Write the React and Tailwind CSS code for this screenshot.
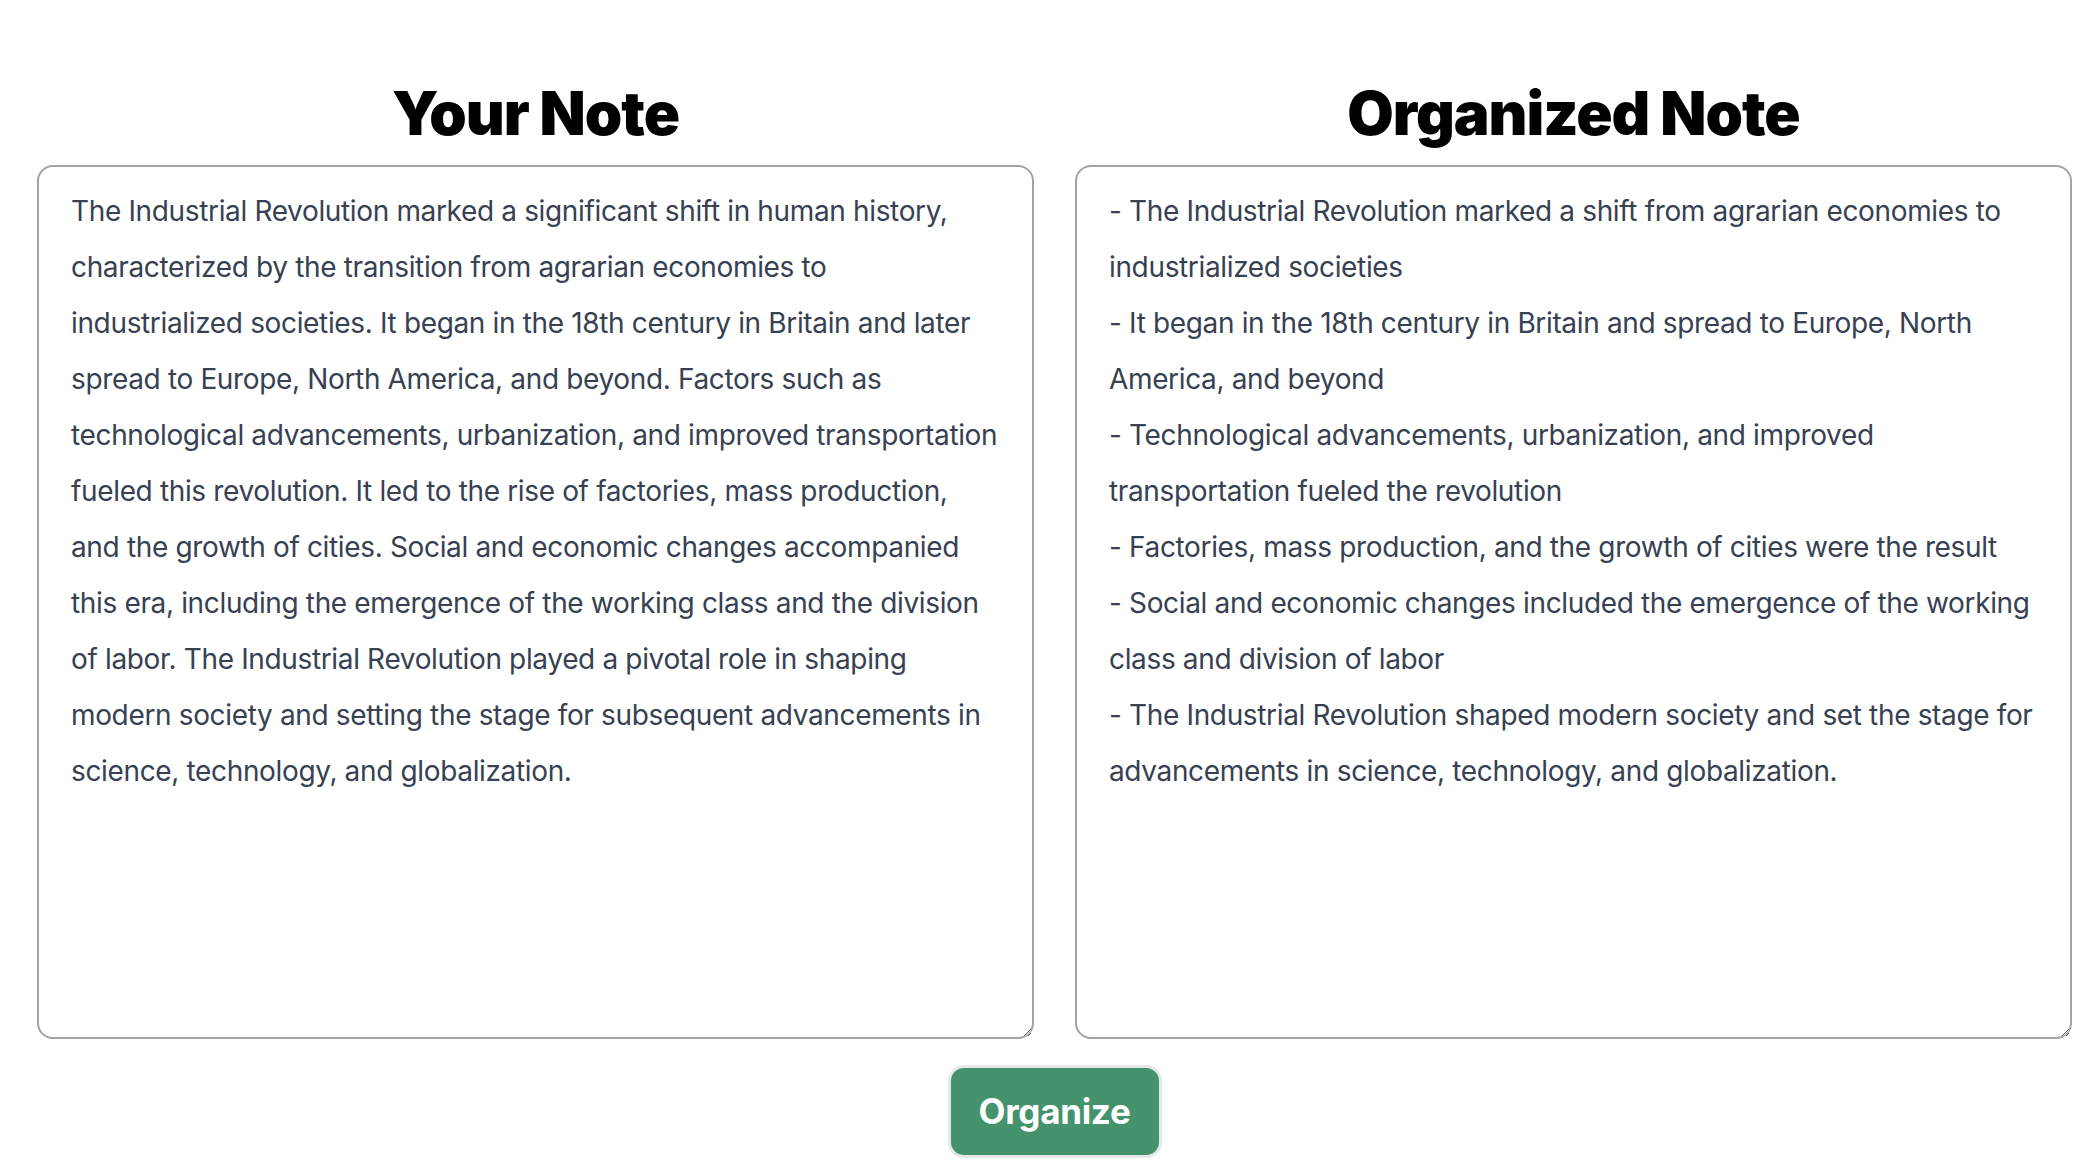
import { useState } from "react";

const NOTE =
  "The Industrial Revolution marked a significant shift in human history, characterized by the transition from agrarian economies to industrialized societies. It began in the 18th century in Britain and later spread to Europe, North America, and beyond. Factors such as technological advancements, urbanization, and improved transportation fueled this revolution. It led to the rise of factories, mass production, and the growth of cities. Social and economic changes accompanied this era, including the emergence of the working class and the division of labor. The Industrial Revolution played a pivotal role in shaping modern society and setting the stage for subsequent advancements in science, technology, and globalization.";

const ORGANIZED = [
  "- The Industrial Revolution marked a shift from agrarian economies to industrialized societies",
  "- It began in the 18th century in Britain and spread to Europe, North America, and beyond",
  "- Technological advancements, urbanization, and improved transportation fueled the revolution",
  "- Factories, mass production, and the growth of cities were the result",
  "- Social and economic changes included the emergence of the working class and division of labor",
  "- The Industrial Revolution shaped modern society and set the stage for advancements in science, technology, and globalization.",
].join("\n");

export default function App() {
  const [note, setNote] = useState(NOTE);
  const [organized, setOrganized] = useState(ORGANIZED);

  const boxClass =
    "w-full h-[874px] resize-y rounded-[16px] border-2 border-[#a2a2a7] bg-white px-[32px] py-[16px] text-[28px] leading-[56px] tracking-[-0.35px] text-[#374151] outline-none";

  return (
    <div
      className="min-h-screen bg-white pl-[37px] pr-[24px] pt-[77px]"
      style={{ fontFamily: "Inter, 'Noto Sans', sans-serif" }}
    >
      <div className="grid grid-cols-2 gap-[41px]">
        <div className="flex flex-col items-center">
          <h1 className="mb-[16px] text-[60px] font-black leading-[72px] tracking-[-1px] text-black">
            Your Note
          </h1>
          <textarea
            className={boxClass}
            value={note}
            onChange={(e) => setNote(e.target.value)}
          />
        </div>
        <div className="flex flex-col items-center">
          <h1 className="mb-[16px] text-[60px] font-black leading-[72px] tracking-[-1px] text-black">
            Organized Note
          </h1>
          <textarea
            className={boxClass}
            value={organized}
            onChange={(e) => setOrganized(e.target.value)}
          />
        </div>
      </div>
      <div className="flex justify-center pt-[26px]">
        <button
          type="button"
          className="h-[93px] w-[214px] rounded-[16px] border-[3px] border-[#e5e7eb] bg-[#44936c] text-[35px] font-bold tracking-[-0.3px] text-white"
        >
          Organize
        </button>
      </div>
    </div>
  );
}
